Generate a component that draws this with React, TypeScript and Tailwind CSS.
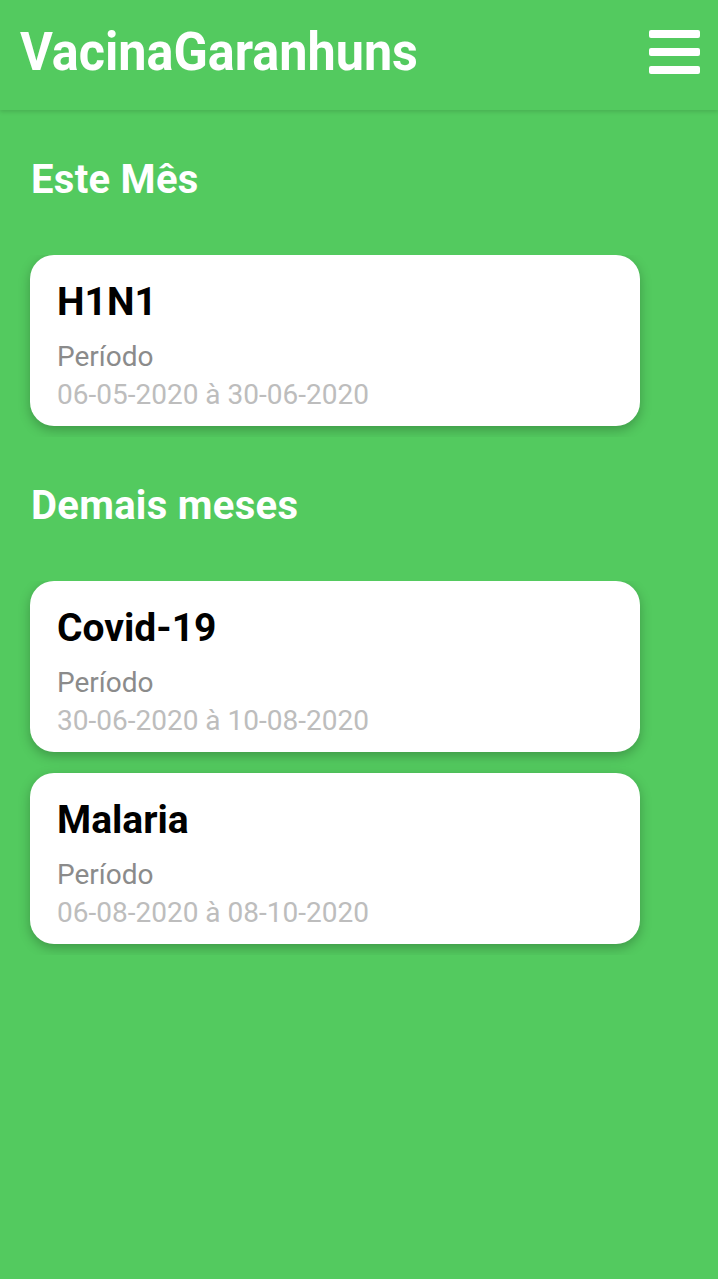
const thisMonth = [{ name: 'H1N1', start: '06-05-2020', end: '30-06-2020' }];

const otherMonths = [
  { name: 'Covid-19', start: '30-06-2020', end: '10-08-2020' },
  { name: 'Malaria', start: '06-08-2020', end: '08-10-2020' },
];

type Vaccine = { name: string; start: string; end: string };

function VaccineCard({ v }: { v: Vaccine }) {
  return (
    <div className="flex h-[171px] w-[610px] flex-col rounded-[24px] bg-white pl-[27px] pt-[28px] shadow-[0_4px_12px_rgba(0,0,0,0.25)]">
      <span className="text-[39px] font-bold leading-none text-black">{v.name}</span>
      <span className="mt-[21px] text-[28px] leading-none text-[#8b8b8b]">Período</span>
      <span className="mt-[10px] text-[28px] leading-none text-[#bdbdbd]">
        {v.start} à {v.end}
      </span>
    </div>
  );
}

function Section({ title, items, top }: { title: string; items: Vaccine[]; top: string }) {
  return (
    <section className={top}>
      <h2 className="pl-[31px] text-[40px] font-bold leading-none tracking-[0.3px] text-white">{title}</h2>
      <div className="mt-[55px] w-[660px] overflow-hidden pb-[11px] pl-[30px] pt-[10px]">
        <div className="-mt-[10px] flex flex-col gap-[21px]">
          {items.map((v) => (
            <VaccineCard key={v.name} v={v} />
          ))}
        </div>
      </div>
    </section>
  );
}

export default function App() {
  return (
    <div className="min-h-[1279px] bg-[#53ca5f] font-['Roboto',sans-serif]">
      <header className="flex h-[110px] items-start justify-between pl-[20px] pr-[18px] pt-[26px] shadow-[0_2px_4px_rgba(0,0,0,0.12)]">
        <span className="origin-left scale-x-[0.95] text-[53px] font-bold leading-none text-white">VacinaGaranhuns</span>
        <div className="mt-[4px] flex w-[51px] flex-col gap-[10px]">
          <span className="h-[8px] rounded-[2px] bg-white" />
          <span className="h-[8px] rounded-[2px] bg-white" />
          <span className="h-[8px] rounded-[2px] bg-white" />
        </div>
      </header>
      <Section title="Este Mês" items={thisMonth} top="pt-[50px]" />
      <Section title="Demais meses" items={otherMonths} top="pt-[49px]" />
    </div>
  );
}
